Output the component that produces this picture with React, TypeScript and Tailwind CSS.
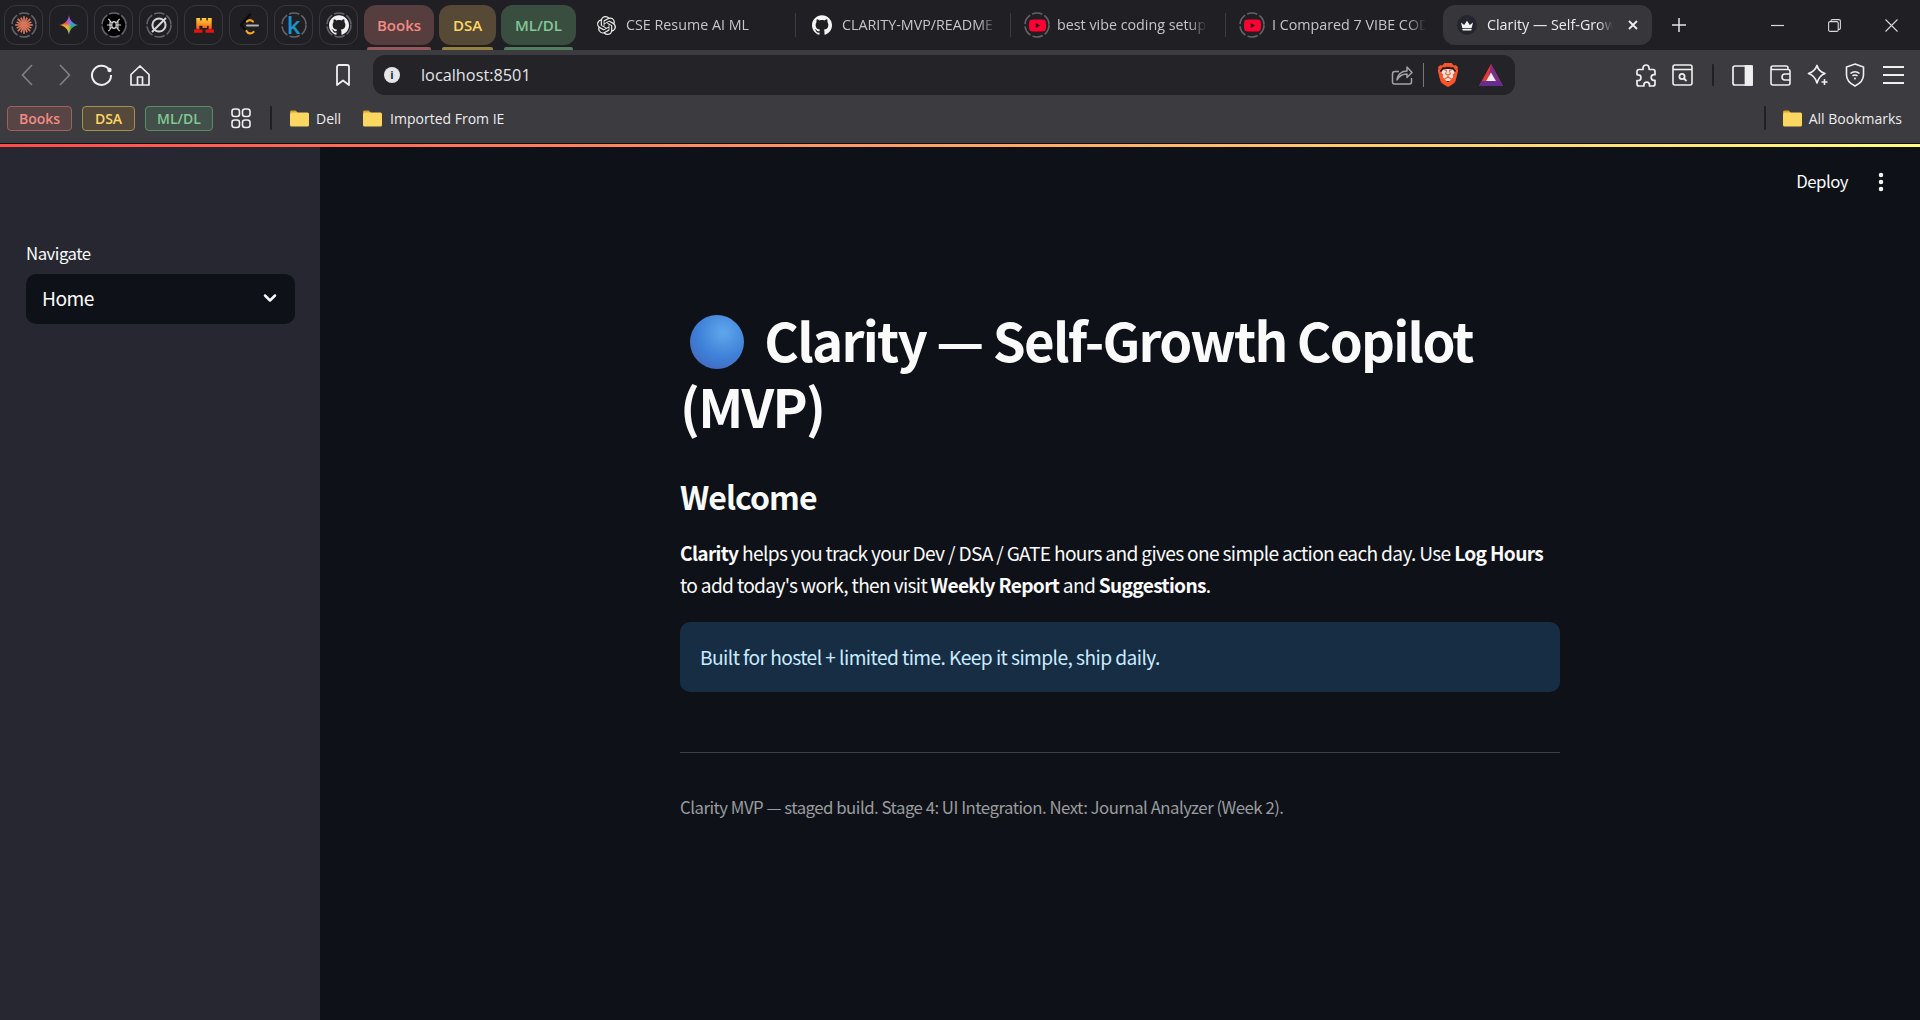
import type { ReactNode } from 'react';
import { ChevronDown, EllipsisVertical } from 'lucide-react';
import { SiBrave, SiGithub, SiOpenai, SiYoutube } from 'react-icons/si';

const ui = "font-['Open_Sans',sans-serif]";
const body = "font-['Noto_Sans_CJK_SC','Source_Sans_Pro',sans-serif]";

function Ring({ children }: { children: ReactNode }) {
  return (
    <div className="relative flex h-[26px] w-[26px] items-center justify-center">
      <svg className="absolute inset-0" width="26" height="26" viewBox="0 0 26 26" fill="none">
        <circle cx="13" cy="13" r="12" stroke="#63646a" strokeWidth="1.6" strokeDasharray="10.5 2.3" />
      </svg>
      {children}
    </div>
  );
}

function Tile({ children }: { children: ReactNode }) {
  return (
    <div className="flex h-[40px] w-[39px] shrink-0 items-center justify-center rounded-[12px] border border-[#37383d]">
      {children}
    </div>
  );
}

function GroupTab({ label, cls, bar, width }: { label: string; cls: string; bar: string; width: string }) {
  return (
    <div className={`relative h-[40px] shrink-0 ${width}`}>
      <div className={`flex h-full items-center justify-center rounded-[12px] text-[15px] font-semibold ${cls}`}>{label}</div>
      <div className={`absolute bottom-[-5px] left-[3px] right-[3px] h-[3px] rounded-t-[2px] ${bar}`} />
    </div>
  );
}

function Sunburst() {
  const rays = Array.from({ length: 16 }, (_, i) => (i * 360) / 16);
  return (
    <svg width="18" height="18" viewBox="0 0 18 18">
      {rays.map((r, i) => (
        <line key={r} x1="9" y1="9" x2="9" y2={i % 2 ? 1 : 0.2} stroke="#d9775a" strokeWidth="1.7" transform={`rotate(${r} 9 9)`} />
      ))}
    </svg>
  );
}

function Gemini() {
  return (
    <svg width="20" height="20" viewBox="0 0 20 20">
      <defs>
        <clipPath id="gem">
          <path d="M10 0C10.6 5.6 14.4 9.4 20 10C14.4 10.6 10.6 14.4 10 20C9.4 14.4 5.6 10.6 0 10C5.6 9.4 9.4 5.6 10 0Z" />
        </clipPath>
        <filter id="gemb">
          <feGaussianBlur stdDeviation="1.3" />
        </filter>
      </defs>
      <g clipPath="url(#gem)">
        <g filter="url(#gemb)">
          <rect x="-2" y="-2" width="12" height="12" fill="#e0503f" />
          <rect x="10" y="-2" width="12" height="12" fill="#3f86f0" />
          <rect x="-2" y="10" width="12" height="12" fill="#f0b429" />
          <rect x="10" y="10" width="12" height="12" fill="#2fae62" />
          <rect x="7" y="-2" width="6" height="9" fill="#a05fd8" />
        </g>
      </g>
    </svg>
  );
}

function Spider() {
  return (
    <div className="flex h-[22px] w-[22px] items-center justify-center rounded-full bg-black">
      <svg width="18" height="18" viewBox="0 0 16 16" fill="none" stroke="#d8d8d8" strokeWidth="1">
        <ellipse cx="8" cy="8" rx="2" ry="3" />
        <path d="M6 6 3 2.5M10 6l3-3.5M6 8H1.8M10 8h4.200M6 10l-3 3.500M10 10l3 3.500M4.500 4v8M11.500 4v8" />
      </svg>
    </div>
  );
}

function Slashed() {
  return (
    <svg width="18" height="18" viewBox="0 0 18 18" fill="none" stroke="#d6d6d8" strokeWidth="2">
      <circle cx="9" cy="9" r="6.6" />
      <path d="M16 2 7 11M11 7 2 16" />
    </svg>
  );
}

function Pixel() {
  return (
    <svg width="20" height="18" viewBox="0 0 26 22">
      <defs>
        <linearGradient id="pix" x1="0" y1="0" x2="0" y2="1">
          <stop offset="0" stopColor="#ffd23c" />
          <stop offset="0.6" stopColor="#fb8a1e" />
          <stop offset="1" stopColor="#f0431b" />
        </linearGradient>
      </defs>
      <path d="M3 2h5v3h2V2h6v3h2V2h5v15h-4v-5h-2v3h-6v-3H7v5H3Z" fill="url(#pix)" />
      <path d="M0 17h11v4H0ZM15 17h11v4H15Z" fill="#e8130f" />
    </svg>
  );
}

function Leet() {
  return (
    <svg width="20" height="24" viewBox="0 0 20 24" fill="none" strokeLinecap="round">
      <path d="M11 1.500 3 10.500a2 2 0 0 0 0 2.800L7.500 18" stroke="#0c0c0d" strokeWidth="2.200" />
      <path d="M8 8.500c1.500-1.500 4-1.800 6 0M7.500 18c1.500 2.800 4.500 3.300 7 1" stroke="#f5a623" strokeWidth="2.200" />
      <path d="M8 12.500h11" stroke="#b3b3b3" strokeWidth="2" />
    </svg>
  );
}

function Folder() {
  return (
    <svg width="19" height="17" viewBox="0 0 19 17" className="shrink-0">
      <path d="M0 2a1.500 1.500 0 0 1 1.500-1.500h4.200L8 3h-8Z" fill="#d9a62e" />
      <rect x="0" y="2.500" width="19" height="14" rx="1.500" fill="#fbd660" />
    </svg>
  );
}

function Crown() {
  return (
    <div className="flex h-[20px] w-[20px] shrink-0 items-center justify-center rounded-full bg-[#24252e]">
      <svg width="14" height="11" viewBox="0 0 14 11">
        <path d="M1 2.500 4.200 5 7 .8 9.800 5 13 2.500 11.700 8H2.300Z" fill="#f2f2f2" />
        <rect x="2.400" y="8.800" width="9.200" height="1.600" rx=".6" fill="#f2f2f2" />
      </svg>
    </div>
  );
}

function Tab({ icon, text, cls }: { icon: ReactNode; text: string; cls: string }) {
  return (
    <div className={`flex h-[40px] shrink-0 items-center ${cls}`}>
      <div className="flex w-[26px] shrink-0 justify-center">{icon}</div>
      <div className={`ml-[7px] min-w-0 flex-1 overflow-hidden whitespace-nowrap text-[14.300px] text-[#c6c6c9] [mask-image:linear-gradient(90deg,#000_88%,transparent)] ${ui}`}>
        {text}
      </div>
    </div>
  );
}

const Sep = () => <div className="h-[24px] w-px shrink-0 bg-[#3b3c41]" />;

function TabStrip() {
  return (
    <div className={`flex h-[50px] shrink-0 items-start bg-[#1f1f24] pt-[5px] ${ui}`}>
      <div className="ml-[4px] flex gap-[6px]">
        <Tile><Ring><Sunburst /></Ring></Tile>
        <Tile><Gemini /></Tile>
        <Tile><Ring><Spider /></Ring></Tile>
        <Tile><Ring><Slashed /></Ring></Tile>
        <Tile><Pixel /></Tile>
        <Tile><Leet /></Tile>
        <Tile><Ring><span className="text-[24px] font-semibold leading-none text-[#1d94c9]">k</span></Ring></Tile>
        <Tile><Ring><SiGithub size={20} color="#f2f2f2" /></Ring></Tile>
      </div>
      <div className="ml-[6px] flex gap-[5px]">
        <GroupTab label="Books" width="w-[70px]" cls="bg-[#563d3e] text-[#f28b82]" bar="bg-[#96595a]" />
        <GroupTab label="DSA" width="w-[57px]" cls="bg-[#564a37] text-[#fdd663]" bar="bg-[#96823e]" />
        <GroupTab label="ML/DL" width="w-[75px]" cls="bg-[#3a4e40] text-[#81c995]" bar="bg-[#527d5f]" />
      </div>
      <div className="ml-[17px] flex h-[40px] items-center">
        <Tab cls="w-[202px] pr-[30px]" icon={<SiOpenai size={19} color="#e8e8e8" />} text="CSE Resume AI ML" />
        <Sep />
        <Tab cls="w-[214px] pl-[13px] pr-[13px]" icon={<SiGithub size={20} color="#f5f5f5" />} text="CLARITY-MVP/README" />
        <Sep />
        <Tab cls="w-[214px] pl-[13px] pr-[18px]" icon={<Ring><SiYoutube size={17} color="#ff0033" /></Ring>} text="best vibe coding setup" />
        <Sep />
        <Tab cls="w-[217px] pl-[13px] pr-[17px]" icon={<Ring><SiYoutube size={17} color="#ff0033" /></Ring>} text="I Compared 7 VIBE CODING" />
      </div>
      <div className="flex h-[40px] w-[209px] shrink-0 items-center rounded-[12px] bg-[#36363b] pl-[14px] pr-[13px]">
        <Crown />
        <span className="ml-[10px] min-w-0 flex-1 overflow-hidden whitespace-nowrap text-[14.300px] text-[#ececee] [mask-image:linear-gradient(90deg,#000_88%,transparent)]">
          Clarity — Self-Growth Copilot
        </span>
        <svg width="12" height="12" viewBox="0 0 12 12" className="ml-[14px] shrink-0" stroke="#eeeeee" strokeWidth="1.800" fill="none">
          <path d="M2 2l8 8M10 2l-8 8" />
        </svg>
      </div>
      <div className="ml-[20px] flex h-[40px] items-center">
        <svg width="14" height="14" viewBox="0 0 14 14" stroke="#e4e4e6" strokeWidth="1.500" fill="none">
          <path d="M7 0v14M0 7h14" />
        </svg>
      </div>
      <div className="ml-auto mr-[22px] flex h-[40px] items-center gap-[44px]">
        <svg width="13" height="13" viewBox="0 0 13 13" stroke="#d8d8da" strokeWidth="1.200" fill="none"><path d="M0 6.500h13" /></svg>
        <svg width="13" height="13" viewBox="0 0 13 13" stroke="#d8d8da" strokeWidth="1.100" fill="none">
          <rect x="0.6" y="2.600" width="9.600" height="9.800" rx="1.500" />
          <path d="M3 2.500V2a1.400 1.400 0 0 1 1.400-1.400h6.600A1.400 1.400 0 0 1 12.400 2v7a1.400 1.400 0 0 1-1.400 1.400h-.8" />
        </svg>
        <svg width="13" height="13" viewBox="0 0 13 13" stroke="#d8d8da" strokeWidth="1.100" fill="none"><path d="M.5.5l12 12M12.500.5l-12 12" /></svg>
      </div>
    </div>
  );
}

function Toolbar() {
  return (
    <div className="flex h-[45px] shrink-0 items-end bg-[#3b3b40]">
      <div className="flex h-[40px] w-[373px] shrink-0 items-center pl-[21px]">
        <svg width="12" height="22" viewBox="0 0 12 22" fill="none" stroke="#7f7f83" strokeWidth="1.700"><path d="M11 1 1.500 11 11 21" /></svg>
        <svg width="12" height="22" viewBox="0 0 12 22" fill="none" stroke="#7f7f83" strokeWidth="1.700" className="ml-[26px]"><path d="M1 1l9.500 10L1 21" /></svg>
        <svg width="22" height="22" viewBox="0 0 22 22" fill="none" stroke="#efeff0" strokeWidth="2" className="ml-[20px]">
          <path d="M18 5.500A9.500 9.500 0 1 0 20 11" />
          <circle cx="18.500" cy="6" r="2.200" fill="#efeff0" stroke="none" />
        </svg>
        <svg width="20" height="21" viewBox="0 0 20 21" fill="none" stroke="#efeff0" strokeWidth="1.700" strokeLinejoin="round" className="ml-[17px]">
          <path d="M1 9.500 10 1l9 8.500V20H1ZM7.500 20v-8h5v8" />
        </svg>
        <svg width="16" height="23" viewBox="0 0 16 23" fill="none" stroke="#efeff0" strokeWidth="1.800" strokeLinejoin="round" className="ml-[185px]">
          <path d="M2 3a2 2 0 0 1 2-2h8a2 2 0 0 1 2 2v18l-6-4.500L2 21Z" />
        </svg>
      </div>
      <div className="flex h-[40px] w-[1142px] shrink-0 items-center rounded-[12px] bg-[#232328] pl-[11px] pr-[12px]">
        <div className={`flex h-[16px] w-[16px] items-center justify-center rounded-full bg-[#e6e6e8] text-[11px] font-bold text-[#232328] ${ui}`}>i</div>
        <span className={`ml-[21px] flex-1 text-[16.300px] text-[#e4e4e6] ${ui}`}>localhost:8501</span>
        <svg width="22" height="20" viewBox="0 0 22 20" fill="none" stroke="#a4a4a8" strokeWidth="1.500" strokeLinejoin="round">
          <path d="M8 6.500H4a2.500 2.500 0 0 0-2.500 2.500v8A2 2 0 0 0 3.500 19h15a2 2 0 0 0 2-2v-4" />
          <path d="M6 15c.5-6 5-9 10-9V2l5 5.500-5 5V9c-4 0-8 2-10 6Z" />
        </svg>
        <div className="ml-[10px] h-[24px] w-px bg-[#77777b]" />
        <div className="relative ml-[12px] h-[24px] w-[24px]">
          <div className="absolute left-[5px] top-[6px] h-[12px] w-[14px] rounded-[5px] bg-[#f6e3dc]" />
          <SiBrave size={24} color="#fb542b" className="relative" />
        </div>
        <svg width="24" height="22" viewBox="0 0 24 22" className="ml-[19px]">
          <path d="M12 0 0 22h24Z" fill="#e8392f" />
          <path d="M12 0 24 22H8Z" fill="#7b2d8b" />
          <path d="M12 8.500 6.500 18h11Z" fill="#f3e9ec" />
          <path d="M0 22l3-5h18l3 5Z" fill="#662d91" />
        </svg>
      </div>
      <div className="flex h-[40px] min-w-0 flex-1 items-center pl-[121px]">
        <svg width="21" height="23" viewBox="0 0 21 23" fill="none" stroke="#efeff0" strokeWidth="1.700" strokeLinejoin="round">
          <path d="M7 4a3 3 0 0 1 6 0l.2 1.500H17a2 2 0 0 1 2 2v3.200h-1a2.800 2.800 0 0 0 0 5.600h1V20a2 2 0 0 1-2 2h-3.500v-1a2.800 2.800 0 0 0-5.600 0v1H3a2 2 0 0 1-2-2v-3.500h1a2.800 2.800 0 0 0 .3-5.600L1 10.700V7.500a2 2 0 0 1 2-2h4Z" />
        </svg>
        <svg width="21" height="22" viewBox="0 0 21 22" fill="none" stroke="#efeff0" strokeWidth="1.600" className="ml-[15px]">
          <rect x="1" y="1" width="19" height="20" rx="2" />
          <path d="M1 5.500h19" />
          <circle cx="10" cy="12.500" r="2.600" strokeWidth="1.800" />
          <path d="M12 14.500l2.500 2.500" strokeWidth="1.800" />
        </svg>
        <div className="ml-[19px] h-[22px] w-[2px] rounded-full bg-[#1f1f24]" />
        <svg width="21" height="21" viewBox="0 0 21 21" fill="none" stroke="#efeff0" strokeWidth="1.700" className="ml-[18px]">
          <rect x="1" y="1" width="19" height="19" rx="2" />
          <rect x="13.500" y="1" width="6.500" height="19" fill="#efeff0" />
        </svg>
        <svg width="21" height="21" viewBox="0 0 21 21" fill="none" stroke="#efeff0" strokeWidth="1.600" className="ml-[17px]">
          <path d="M3 4.500C1.500 4.500 1 3.500 1 3s.5-2 2-2h13a2 2 0 0 1 2 2v1.500M3 4.500h15a2 2 0 0 1 2 2V18a2 2 0 0 1-2 2H3a2 2 0 0 1-2-2V3" />
          <path d="M20 9h-5a3 3 0 0 0 0 6h5" />
        </svg>
        <svg width="22" height="22" viewBox="0 0 22 22" fill="none" stroke="#efeff0" strokeWidth="1.700" strokeLinejoin="round" className="ml-[16px]">
          <path d="M10 1.500c1 4 3.500 6.500 8 8-4 1.500-6.500 4-8 9.500-1.500-5.500-4-8-8.500-9.500C6 8 8.500 5.500 10 1.500Z" />
          <path d="M17.500 15v6M14.500 18h6" strokeWidth="1.600" />
        </svg>
        <svg width="20" height="24" viewBox="0 0 20 24" fill="none" stroke="#efeff0" strokeWidth="1.600" className="ml-[16px]">
          <path d="M10 1l8.500 3v8c0 5-3.500 8.500-8.500 11C5 20.500 1.500 17 1.500 12V4Z" />
          <path d="M5.500 10.500a6.500 6.500 0 0 1 9 0M7.500 13a3.500 3.500 0 0 1 5 0" />
          <circle cx="10" cy="15.500" r="1" fill="#efeff0" stroke="none" />
        </svg>
        <svg width="21" height="18" viewBox="0 0 21 18" stroke="#efeff0" strokeWidth="1.800" className="ml-[18px]">
          <path d="M0 1h21M0 9h21M0 17h21" />
        </svg>
      </div>
    </div>
  );
}

function BookmarkChip({ label, width, cls }: { label: string; width: string; cls: string }) {
  return (
    <div className={`flex h-[25px] items-center justify-center rounded-[4px] border text-[14px] font-semibold ${width} ${cls}`}>{label}</div>
  );
}

function BookmarkBar() {
  return (
    <div className={`flex h-[48px] shrink-0 items-center bg-[#3b3b40] pb-[2px] pl-[7px] pr-[18px] text-[14px] text-[#ededee] ${ui}`}>
      <BookmarkChip label="Books" width="w-[65px]" cls="border-[#a35f5f] bg-[#574445] text-[#f28b82]" />
      <BookmarkChip label="DSA" width="w-[53px] ml-[10px]" cls="border-[#a38f50] bg-[#54493a] text-[#fdd663]" />
      <BookmarkChip label="ML/DL" width="w-[68px] ml-[10px]" cls="border-[#5c8d6a] bg-[#41504a] text-[#81c995]" />
      <svg width="20" height="22" viewBox="0 0 20 22" fill="none" stroke="#efeff0" strokeWidth="1.600" className="ml-[18px]">
        <rect x="1" y="2" width="7.500" height="7.500" rx="2.500" />
        <rect x="11.500" y="2" width="7.500" height="7.500" rx="2.500" />
        <rect x="1" y="13" width="7.500" height="7.500" rx="2.500" />
        <rect x="11.500" y="13" width="7.500" height="7.500" rx="2.500" />
      </svg>
      <div className="ml-[19px] h-[24px] w-[2px] rounded-full bg-[#1f1f24]" />
      <div className="ml-[18px]"><Folder /></div>
      <span className="ml-[7px]">Dell</span>
      <div className="ml-[22px]"><Folder /></div>
      <span className="ml-[8px]">Imported From IE</span>
      <div className="ml-auto h-[24px] w-[2px] rounded-full bg-[#1f1f24]" />
      <div className="ml-[17px]"><Folder /></div>
      <span className="ml-[7px]">All Bookmarks</span>
    </div>
  );
}

function Sphere() {
  return (
    <span className="mx-[10px] inline-block h-[54px] w-[54px] rounded-full bg-[radial-gradient(circle_at_62%_32%,#5fa8ec_0%,#3f80d8_52%,#4468bd_85%,#5f6cae_100%)] align-[-7px]" />
  );
}

export default function App() {
  return (
    <div className="flex h-[1020px] w-[1920px] flex-col overflow-hidden bg-[#0e1117]">
      <TabStrip />
      <Toolbar />
      <BookmarkBar />
      <div className="mt-px h-[3px] shrink-0 bg-[linear-gradient(90deg,#ff4b4b,#fffd80)]" />
      <div className={`flex min-h-0 flex-1 ${body}`}>
        <aside className="w-[320px] shrink-0 bg-[#262730] px-[26px] pt-[92px]">
          <label className="block text-[16.800px] leading-[28px] tracking-[-0.03em] text-[#fafafa]">Navigate</label>
          <div className="mt-[7px] flex h-[50px] w-[269px] items-center justify-between rounded-[10px] bg-[#0e1117] pb-[2px] pl-[16px] pr-[15px] text-[19.200px] tracking-[-0.03em] text-[#fafafa]">
            Home
            <ChevronDown size={20} strokeWidth={3} color="#fafafa" />
          </div>
        </aside>
        <main className="min-w-0 flex-1">
          <div className="flex h-[70px] items-center justify-end pr-[27px] text-[#fafafa]">
            <span className="text-[16.800px] tracking-[-0.03em]">Deploy</span>
            <EllipsisVertical size={24} strokeWidth={2.500} className="ml-[21px]" />
          </div>
          <div className="mx-auto w-[880px] pt-[89px] text-[#fafafa]">
            <h1 className="text-[52.800px] font-bold leading-[66px] tracking-[-0.033em]">
              <Sphere /> Clarity — Self-Growth Copilot (MVP)
            </h1>
            <h2 className="mt-[37px] text-[32px] font-semibold leading-[42px] tracking-[-0.03em]">Welcome</h2>
            <p className="mt-[20px] text-[19.200px] leading-[32px] tracking-[-0.036em]">
              <b className="font-semibold">Clarity</b> helps you track your Dev / DSA / GATE hours and gives one simple action each day. Use <b className="font-semibold">Log Hours</b> to add today's work, then visit <b className="font-semibold">Weekly Report</b> and <b className="font-semibold">Suggestions</b>.
            </p>
            <div className="mt-[21px] flex h-[70px] items-center rounded-[10px] bg-[#172d43] px-[20px] text-[19.200px] tracking-[-0.03em] text-[#c7ebff]">
              Built for hostel + limited time. Keep it simple, ship daily.
            </div>
            <hr className="mt-[60px] border-0 border-t border-[#3d4044]" />
            <p className="mt-[40px] text-[16.800px] leading-[28px] tracking-[-0.03em] text-[#9a9c9f]">
              Clarity MVP — staged build. Stage 4: UI Integration. Next: Journal Analyzer (Week 2).
            </p>
          </div>
        </main>
      </div>
    </div>
  );
}
